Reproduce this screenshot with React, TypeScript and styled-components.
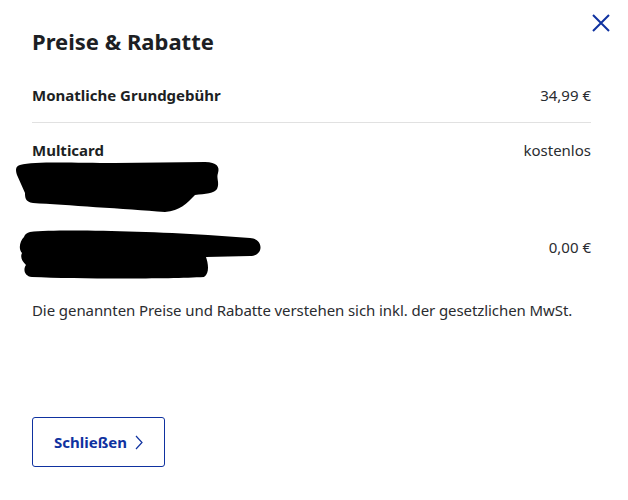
import React from "react";
import styled, { createGlobalStyle } from "styled-components";

const Global = createGlobalStyle`
  html, body { margin: 0; padding: 0; background: #fff; }
  body { font-family: "Noto Sans", "Open Sans", sans-serif; color: #222; }
`;

const BLUE = "#0f32a0";

const Modal = styled.div`
  position: relative;
  width: 628px;
  height: 500px;
  box-sizing: border-box;
  padding: 26px 37px 0 32px;
  display: flex;
  flex-direction: column;
`;

const CloseButton = styled.button`
  position: absolute;
  top: 13px;
  right: 17px;
  width: 20px;
  height: 20px;
  padding: 0;
  border: 0;
  background: none;
  display: flex;
  align-items: center;
  justify-content: center;
  cursor: pointer;
`;

const Title = styled.h2`
  margin: 0 0 28px;
  font-size: 22px;
  line-height: 30px;
  font-weight: 700;
  color: #1d1f24;
`;

const Row = styled.div<{ $divider?: boolean }>`
  display: flex;
  justify-content: space-between;
  align-items: flex-start;
  padding-bottom: ${(p) => (p.$divider ? "16px" : "0")};
  border-bottom: ${(p) => (p.$divider ? "1px solid #e1e1e1" : "none")};
`;

const LeftCol = styled.div`
  display: flex;
  flex-direction: column;
`;

const Label = styled.span`
  font-size: 15px;
  line-height: 22px;
  font-weight: 700;
  color: #1d1f24;
`;

const Value = styled.span<{ $offset?: number }>`
  font-size: 15px;
  line-height: 22px;
  color: #2a2c30;
  margin-top: ${(p) => p.$offset ?? 0}px;
`;

const Section = styled.div<{ $top: number }>`
  margin-top: ${(p) => p.$top}px;
`;

const Redaction = styled.svg<{ $shift: number }>`
  display: block;
  margin-left: ${(p) => p.$shift}px;
`;

const Note = styled.p`
  margin: 19px 0 0;
  font-size: 15px;
  line-height: 22px;
  letter-spacing: -0.08px;
  color: #2a2c30;
`;

const Footer = styled.div`
  margin-top: 96px;
  display: flex;
`;

const OutlineButton = styled.button`
  width: 133px;
  height: 50px;
  box-sizing: border-box;
  border: 1px solid ${BLUE};
  border-radius: 3px;
  background: #fff;
  color: ${BLUE};
  font-family: inherit;
  font-size: 15px;
  font-weight: 700;
  display: flex;
  align-items: center;
  justify-content: center;
  gap: 8px;
  padding: 0;
  cursor: pointer;
`;

export default function App() {
  return (
    <>
      <Global />
      <Modal>
        <CloseButton aria-label="Schließen">
          <svg width="18" height="18" viewBox="0 0 18 18">
            <path d="M1 1 L17 17 M17 1 L1 17" stroke={BLUE} strokeWidth="2" fill="none" />
          </svg>
        </CloseButton>
        <Title>Preise &amp; Rabatte</Title>
        <Row $divider>
          <Label>Monatliche Grundgebühr</Label>
          <Value>34,99 €</Value>
        </Row>
        <Section $top={16}>
          <Row>
            <LeftCol>
              <Label>Multicard</Label>
              <Redaction $shift={-17} width="206" height="52" viewBox="0 0 206 52">
                <path
                  d="M5 4 C20 0 60 2 100 2 L190 1 C202 1 205 6 203 12 C201 17 205 22 202 28 C200 32 190 33 180 34 C172 42 165 50 150 51 C110 48 50 44 18 42 C10 41 10 36 10 32 L2 14 C0 8 1 5 5 4 Z"
                  fill="#000"
                />
              </Redaction>
            </LeftCol>
            <Value>kostenlos</Value>
          </Row>
        </Section>
        <Section $top={16}>
          <Row>
            <Redaction $shift={-14} width="246" height="51" viewBox="0 0 246 51">
              <path
                d="M12 3 C40 0 120 2 190 6 L232 9 C246 10 246 27 232 27 L188 28 C190 34 192 44 186 48 C150 50 60 50 14 48 C6 47 5 40 8 36 C4 32 2 28 4 24 C0 20 2 12 6 8 C7 5 9 4 12 3 Z"
                fill="#000"
              />
            </Redaction>
            <Value $offset={7}>0,00 €</Value>
          </Row>
        </Section>
        <Note>Die genannten Preise und Rabatte verstehen sich inkl. der gesetzlichen MwSt.</Note>
        <Footer>
          <OutlineButton>
            Schließen
            <svg width="8" height="15" viewBox="0 0 8 15">
              <path d="M1 1 L7 7.5 L1 14" stroke={BLUE} strokeWidth="1.2" fill="none" />
            </svg>
          </OutlineButton>
        </Footer>
      </Modal>
    </>
  );
}
